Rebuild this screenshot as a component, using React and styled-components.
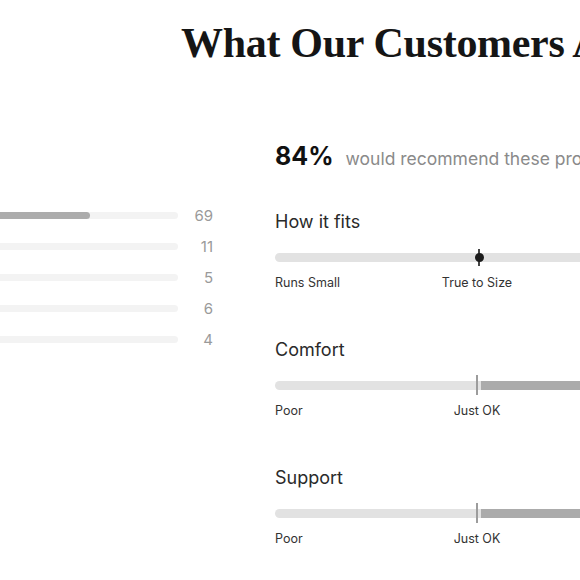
import styled, { createGlobalStyle } from 'styled-components';

const GlobalStyle = createGlobalStyle`
  html, body {
    margin: 0;
    padding: 0;
    background: #ffffff;
    overflow: hidden;
  }
`;

const colors = {
  text: '#222222',
  muted: '#8a8a8a',
  count: '#9a9a9a',
  barTrack: '#f3f3f3',
  barFill: '#acacac',
  track: '#e2e2e2',
  trackDark: '#ababab',
  tick: '#9c9c9c',
};

const Page = styled.div`
  width: 580px;
  height: 580px;
  overflow: hidden;
  background: #fff;
  font-family: Inter, "Liberation Sans", sans-serif;
  color: ${colors.text};
`;

const Heading = styled.h1`
  margin: 0;
  padding: 18px 0 0 181px;
  font-family: "Liberation Serif", serif;
  font-size: 42px;
  font-weight: 700;
  line-height: 50px;
  color: #151515;
  white-space: nowrap;
  letter-spacing: -0.3px;
`;

const Columns = styled.div`
  display: flex;
  gap: 62px;
  margin-left: -143px;
`;

const Breakdown = styled.div`
  width: 356px;
  flex-shrink: 0;
  padding-top: 132px;
`;

const BarRow = styled.div`
  display: grid;
  grid-template-columns: 1fr 35px;
  align-items: center;
  height: 31px;
`;

const Bar = styled.div`
  height: 7px;
  border-radius: 4px;
  background: ${colors.barTrack};
  overflow: hidden;
`;

const BarFill = styled.div`
  height: 100%;
  border-radius: 4px;
  background: ${colors.barFill};
`;

const Count = styled.span`
  text-align: right;
  font-size: 15px;
  color: ${colors.count};
`;

const Summary = styled.div`
  width: 404px;
  flex-shrink: 0;
  padding-top: 73px;
`;

const Recommend = styled.div`
  display: flex;
  align-items: baseline;
  gap: 12px;
  height: 30px;
  line-height: 30px;
  white-space: nowrap;
`;

const Percent = styled.span`
  font-size: 25px;
  font-weight: 700;
  color: #111;
`;

const RecommendText = styled.span`
  font-size: 17.5px;
  color: ${colors.muted};
`;

const Section = styled.div`
  margin-top: ${p => (p.$first ? '39px' : '47px')};
`;

const SectionTitle = styled.div`
  font-size: 18px;
  line-height: 24px;
  color: #2a2a2a;
  margin-bottom: 13px;
`;

const TrackWrap = styled.div`
  position: relative;
  height: 20px;
  display: flex;
  align-items: center;
`;

const Track = styled.div`
  position: relative;
  width: 100%;
  height: 9px;
  border-radius: 5px;
  background: ${colors.track};
`;

const TrackDark = styled.div`
  position: absolute;
  top: 0;
  bottom: 0;
  left: 50.9%;
  right: 0;
  background: ${colors.trackDark};
`;

const Tick = styled.div`
  position: absolute;
  top: 0;
  left: calc(50% - 1px);
  width: 2px;
  height: 20px;
  background: ${colors.tick};
`;

const Marker = styled.div`
  position: absolute;
  top: 2px;
  left: 50.5%;
  width: 2px;
  height: 17px;
  margin-left: -1px;
  background: #444;

  &::after {
    content: '';
    position: absolute;
    top: 4px;
    left: -3.5px;
    width: 9px;
    height: 9px;
    border-radius: 50%;
    background: #1c1c1c;
  }
`;

const Labels = styled.div`
  display: grid;
  grid-template-columns: 1fr 1fr 1fr;
  margin-top: 8px;
  font-size: 12.5px;
  line-height: 16px;
  color: #333;

  & > span:nth-child(2) {
    justify-self: center;
  }
  & > span:nth-child(3) {
    justify-self: end;
  }
`;

const ratings = [
  { stars: 5, count: 69 },
  { stars: 4, count: 11 },
  { stars: 3, count: 5 },
  { stars: 2, count: 6 },
  { stars: 1, count: 4 },
];

const total = ratings.reduce((s, r) => s + r.count, 0);

const sections = [
  { title: 'How it fits', kind: 'fit', labels: ['Runs Small', 'True to Size', 'Runs Large'] },
  { title: 'Comfort', kind: 'scale', labels: ['Poor', 'Just OK', 'Excellent'] },
  { title: 'Support', kind: 'scale', labels: ['Poor', 'Just OK', 'Excellent'] },
];

export default function App() {
  return (
    <Page>
      <GlobalStyle />
      <Heading>What Our Customers Are Saying</Heading>
      <Columns>
        <Breakdown>
          {ratings.map(r => (
            <BarRow key={r.stars}>
              <Bar>
                <BarFill style={{ width: `${(r.count / total) * 100}%` }} />
              </Bar>
              <Count>{r.count}</Count>
            </BarRow>
          ))}
        </Breakdown>
        <Summary>
          <Recommend>
            <Percent>84%</Percent>
            <RecommendText>would recommend these products</RecommendText>
          </Recommend>
          {sections.map((s, i) => (
            <Section key={s.title} $first={i === 0}>
              <SectionTitle>{s.title}</SectionTitle>
              <TrackWrap>
                <Track>{s.kind === 'scale' && <TrackDark />}</Track>
                {s.kind === 'scale' ? <Tick /> : <Marker />}
              </TrackWrap>
              <Labels>
                {s.labels.map(l => (
                  <span key={l}>{l}</span>
                ))}
              </Labels>
            </Section>
          ))}
        </Summary>
      </Columns>
    </Page>
  );
}
